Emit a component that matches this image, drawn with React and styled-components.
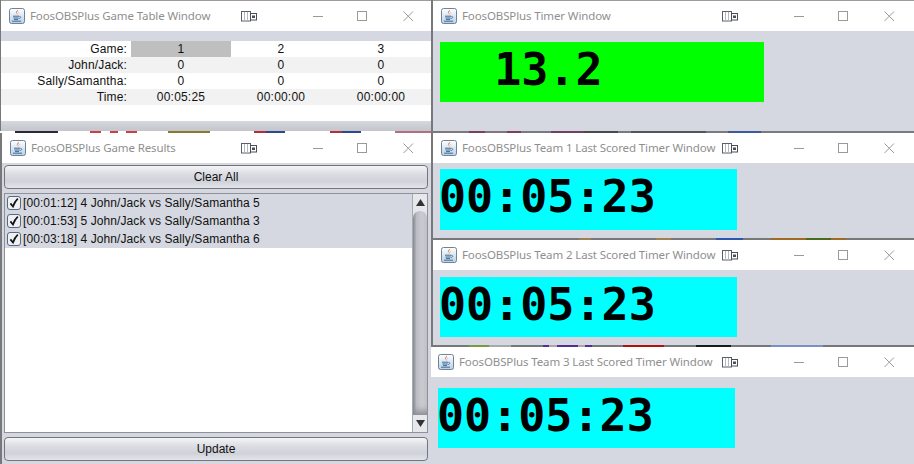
import React from "react";
import styled, { createGlobalStyle } from "styled-components";

const Global = createGlobalStyle`
  html, body { margin: 0; padding: 0; background: #6f7073; }
  body { width: 914px; height: 464px; overflow: hidden; font-family: "Liberation Sans", Arial, sans-serif; }
`;

const Desktop = styled.div`
  width: 914px;
  height: 464px;
  display: grid;
  grid-template-columns: 431px 483px;
  overflow: hidden;
  background: #77787a;
`;
const Column = styled.div`
  display: flex;
  flex-direction: column;
  min-width: 0;
`;
const Wallpaper = styled.div`
  height: ${(p) => p.$h}px;
  flex: none;
  background: ${(p) => p.$bg};
`;
const Win = styled.section`
  flex: ${(p) => (p.$grow ? "1 1 0" : "none")};
  height: ${(p) => (p.$h ? `${p.$h}px` : "auto")};
  margin-left: ${(p) => p.$inset || 0}px;
  background: #d5d8e0;
  display: flex;
  flex-direction: column;
  box-sizing: border-box;
  min-height: 0;
`;
const TitleBar = styled.header`
  flex: none;
  height: ${(p) => p.$h || 30}px;
  box-sizing: border-box;
  background: #fff;
  display: flex;
  align-items: center;
  padding: 0 ${(p) => p.$pr ?? 19}px 0 ${(p) => p.$pl ?? 8}px;
  border-top: ${(p) => (p.$top ? "1px solid #9c9c9c" : "none")};
`;
const AppIcon = styled.svg`
  width: 16px;
  height: 16px;
  flex: none;
  margin-right: 5px;
`;
const Title = styled.span`
  flex: 1;
  min-width: 0;
  padding-bottom: 2px;
  white-space: nowrap;
  font: 11.5px "Noto Sans", "Open Sans", sans-serif;
  letter-spacing: -0.12px;
  color: #8f8f8f;
`;
const Controls = styled.div`
  display: flex;
  align-items: center;
  flex: none;
`;
const PinIcon = styled.svg`
  width: 16px;
  height: 11px;
  margin-right: 56px;
`;
const CapIcon = styled.svg`
  width: 11px;
  height: 11px;
  margin-right: ${(p) => p.$mr || 0}px;
`;
const TableBody = styled.div`
  flex: 1;
  padding-top: 10px;
  display: flex;
  flex-direction: column;
`;
const ScoreTable = styled.div`
  background: #fff;
  flex: none;
  padding-bottom: 16px;
`;
const TableFoot = styled.div`
  flex: 1;
  background: linear-gradient(#d5d8e0, #c4c5ca);
`;
const ScoreRow = styled.div`
  display: grid;
  grid-template-columns: 130px repeat(3, 100px);
  height: 16px;
  background: ${(p) => (p.$alt ? "#f2f2f2" : "#fff")};
  font-size: 12px;
  line-height: 16px;
  color: #111;
`;
const RowLabel = styled.div`
  text-align: right;
  padding-right: 4px;
  letter-spacing: 0.15px;
`;
const Cell = styled.div`
  text-align: center;
  letter-spacing: 0.2px;
  background: ${(p) => (p.$sel ? "#bfbfbf" : "transparent")};
`;
const ResultsBody = styled.div`
  flex: 1;
  min-height: 0;
  padding: 2px 3px 3px 2px;
  display: flex;
  flex-direction: column;
  gap: 4px;
`;
const ActionButton = styled.button`
  flex: none;
  height: 24px;
  border: 1px solid #72757c;
  border-radius: 4px;
  padding: 0;
  background: linear-gradient(#f4f5f7 0%, #dcdee4 35%, #cfd2d9 70%, #e3e5ea 100%);
  font: 12px "Liberation Sans", Arial, sans-serif;
  color: #111;
`;
const ListFrame = styled.div`
  flex: 1;
  min-height: 0;
  display: flex;
  background: #fff;
  border: 1px solid #8e9199;
`;
const ResultList = styled.ul`
  flex: 1;
  list-style: none;
  margin: 0;
  padding: 0;
`;
const ResultRow = styled.li`
  height: 18px;
  display: flex;
  align-items: center;
  gap: 2px;
  padding-left: 2px;
  background: #d5d8e0;
  font-size: 12px;
  color: #111;
  letter-spacing: 0.08px;
  white-space: nowrap;
`;
const Check = styled.svg`
  width: 14px;
  height: 14px;
  flex: none;
`;
const Scrollbar = styled.div`
  width: 15px;
  flex: none;
  display: flex;
  flex-direction: column;
  border-left: 1px solid #a8abb2;
  box-sizing: border-box;
  background: #e2e4e9;
`;
const Arrow = styled.div`
  height: 17px;
  flex: none;
  display: flex;
  align-items: center;
  justify-content: center;
  background: #e6e8ec;
`;
const Thumb = styled.div`
  flex: 1;
  border-radius: 7px 7px 0 0;
  background: linear-gradient(90deg, #85888f 0%, #b9bcc3 25%, #c9cbd1 60%, #c3c5cb 100%);
  box-shadow: inset 0 -8px 6px -4px #8b8d92;
`;
const TimerBody = styled.div`
  flex: 1;
  min-height: 0;
  padding: ${(p) => p.$pt}px 0 0 7px;
`;
const TimerFace = styled.div`
  width: ${(p) => p.$w}px;
  height: ${(p) => p.$h}px;
  background: ${(p) => p.$bg};
  font: bold 45px/1 "DejaVu Sans Mono", monospace;
  color: #000;
  white-space: pre;
  display: flex;
  align-items: center;
  padding-bottom: 6px;
  box-sizing: border-box;
`;
const TimerText = styled.span`
  margin-left: ${(p) => p.$nudge ?? -1}px;
`;

const JavaIcon = () => (
  <AppIcon viewBox="0 0 16 16">
    <defs>
      <linearGradient id="jg" x1="0" y1="0" x2="0" y2="1">
        <stop offset="0" stopColor="#ffffff" />
        <stop offset="1" stopColor="#b9cfe6" />
      </linearGradient>
    </defs>
    <rect x="0.5" y="0.5" width="15" height="15" rx="2" fill="url(#jg)" stroke="#6f8296" />
    <path d="M8.6 1.8C9.6 3.4 6.6 4.4 7.4 6.4 6 5 7.4 3.6 8.6 1.8ZM10 4C9.6 5 8.2 5.4 8.6 7 7.8 6 8.6 4.8 10 4Z" fill="#e2651c" />
    <path d="M4 8.2H10M4.4 10H9.8M5 11.6H9M3 13.2H12" stroke="#3f6d97" strokeWidth="1" fill="none" />
    <path d="M10.2 8.4C12.4 8 12.4 10.2 10 10.6" stroke="#3f6d97" strokeWidth="0.8" fill="none" />
  </AppIcon>
);

const Caption = () => (
  <Controls>
    <PinIcon viewBox="0 0 16 11">
      <rect x="0.5" y="0.5" width="9" height="9.5" fill="#fff" stroke="#5b5f68" />
      <path d="M3.5 1V10M6.5 1V10" stroke="#b4b7be" />
      <rect x="9.5" y="2.5" width="6" height="6.5" fill="#fff" stroke="#4a4e57" />
      <rect x="11" y="4.5" width="3" height="2.5" fill="#4a4e57" />
    </PinIcon>
    <CapIcon viewBox="0 0 11 11" $mr={33}>
      <path d="M0 5.5H10" stroke="#9a9a9a" />
    </CapIcon>
    <CapIcon viewBox="0 0 11 11" $mr={35}>
      <rect x="0.5" y="0.5" width="9" height="9" fill="none" stroke="#9a9a9a" />
    </CapIcon>
    <CapIcon viewBox="0 0 11 11">
      <path d="M0.5 0.5L10 10M10 0.5L0.5 10" stroke="#9a9a9a" />
    </CapIcon>
  </Controls>
);

const Bar = ({ title, ...rest }) => (
  <TitleBar {...rest}>
    <JavaIcon />
    <Title>{title}</Title>
    <Caption />
  </TitleBar>
);

const CheckMark = () => (
  <Check viewBox="0 0 14 14">
    <rect x="0.5" y="0.5" width="13" height="13" rx="2.5" fill="#eef0f4" stroke="#56697f" />
    <path d="M3.4 7.4L6 10.6C7 7.6 8.6 4.6 10.8 2.6" stroke="#111" strokeWidth="1.7" fill="none" />
  </Check>
);

const scores = [
  { label: "Game:", values: ["1", "2", "3"] },
  { label: "John/Jack:", values: ["0", "0", "0"], alt: true },
  { label: "Sally/Samantha:", values: ["0", "0", "0"] },
  { label: "Time:", values: ["00:05:25", "00:00:00", "00:00:00"], alt: true },
];
const results = [
  "[00:01:12] 4 John/Jack vs Sally/Samantha 5",
  "[00:01:53] 5 John/Jack vs Sally/Samantha 3",
  "[00:03:18] 4 John/Jack vs Sally/Samantha 6",
];

const leftStrip =
  "linear-gradient(90deg,#fff 0 15px,#2a2a3a 15px 58px,#fff 58px 90px,#c8404a 90px 101px,#fff 101px 110px,#c8404a 110px 118px,#fff 118px 126px,#c8404a 126px 137px,#fff 137px 168px,#8a7a30 168px 210px,#fff 210px 254px,#b03040 254px 266px,#2a4a90 266px 285px,#fff 285px 330px,#b03040 330px 342px,#2a4a90 342px 361px,#fff 361px 395px,#b07080 395px 431px)";
const r1 =
  "linear-gradient(90deg,#7a7a7e 0 38px,#7a4060 38px 54px,#7a7a7e 54px 76px,#7a4060 76px 90px,#7a7a7e 90px 120px,#704060 120px 153px,#4a4a4a 153px 187px,#7a7a7e 187px 200px,#555 200px 275px,#7a7a7e 275px 297px,#3a5a9a 297px 330px,#7a7a7e 330px)";
const r2 =
  "linear-gradient(90deg,#77787a 0 148px,#a08050 148px 160px,#77787a 160px 225px,#a08050 225px 240px,#77787a 240px 285px,#2a58b0 285px 312px,#77787a 312px 340px,#a06a20 340px 375px,#4a6a20 375px 400px,#a06a20 400px 415px,#77787a 415px)";
const r3 =
  "linear-gradient(90deg,#77787a 0 38px,#7c9a44 38px 58px,#a8a8a8 58px 80px,#77787a 80px 112px,#503090 112px 118px,#a8a8a8 118px 126px,#503090 126px 147px,#a8a8a8 147px 154px,#503090 154px 161px,#77787a 161px 192px,#b01010 192px 233px,#77787a 233px 265px,#1a1a1a 265px 300px,#77787a 300px 340px,#7a90c8 340px 392px,#77787a 392px)";

export default function App() {
  return (
    <>
      <Global />
      <Desktop>
        <Column>
          <Win $h={131} $inset={1}>
            <Bar title="FoosOBSPlus Game Table Window" $h={31} $top $pr={17} />
            <TableBody>
              <ScoreTable>
                {scores.map((row) => (
                  <ScoreRow key={row.label} $alt={row.alt}>
                    <RowLabel>{row.label}</RowLabel>
                    {row.values.map((v, i) => (
                      <Cell key={i} $sel={row.label === "Game:" && i === 0}>
                        {v}
                      </Cell>
                    ))}
                  </ScoreRow>
                ))}
              </ScoreTable>
              <TableFoot />
            </TableBody>
          </Win>
          <Wallpaper $h={2} $bg={leftStrip} />
          <Win $grow $inset={2}>
            <Bar title="FoosOBSPlus Game Results" $pr={17} />
            <ResultsBody>
              <ActionButton>Clear All</ActionButton>
              <ListFrame>
                <ResultList>
                  {results.map((r) => (
                    <ResultRow key={r}>
                      <CheckMark />
                      {r}
                    </ResultRow>
                  ))}
                </ResultList>
                <Scrollbar>
                  <Arrow>
                    <svg width="9" height="7" viewBox="0 0 9 7"><path d="M4.5 0L9 7H0Z" fill="#333" /></svg>
                  </Arrow>
                  <Thumb />
                  <Arrow>
                    <svg width="9" height="7" viewBox="0 0 9 7"><path d="M4.5 7L9 0H0Z" fill="#333" /></svg>
                  </Arrow>
                </Scrollbar>
              </ListFrame>
              <ActionButton>Update</ActionButton>
            </ResultsBody>
          </Win>
        </Column>
        <Column>
          <Win $h={131} $inset={2}>
            <Bar title="FoosOBSPlus Timer Window" $h={31} $top />
            <TimerBody $pt={11}>
              <TimerFace $w={324} $h={60} $bg="#00ff00"><TimerText $nudge={0}>{"  13.2"}</TimerText></TimerFace>
            </TimerBody>
          </Win>
          <Wallpaper $h={2} $bg={r1} />
          <Win $h={105} $inset={2}>
            <Bar title="FoosOBSPlus Team 1 Last Scored Timer Window" />
            <TimerBody $pt={6}>
              <TimerFace $w={297} $h={61} $bg="#00ffff"><TimerText>00:05:23</TimerText></TimerFace>
            </TimerBody>
          </Win>
          <Wallpaper $h={2} $bg={r2} />
          <Win $h={105} $inset={2}>
            <Bar title="FoosOBSPlus Team 2 Last Scored Timer Window" />
            <TimerBody $pt={7}>
              <TimerFace $w={297} $h={60} $bg="#00ffff"><TimerText>00:05:23</TimerText></TimerFace>
            </TimerBody>
          </Win>
          <Wallpaper $h={2} $bg={r3} />
          <Win $grow>
            <Bar title="FoosOBSPlus Team 3 Last Scored Timer Window" $pl={7} />
            <TimerBody $pt={11}>
              <TimerFace $w={297} $h={60} $bg="#00ffff"><TimerText>00:05:23</TimerText></TimerFace>
            </TimerBody>
          </Win>
        </Column>
      </Desktop>
    </>
  );
}
